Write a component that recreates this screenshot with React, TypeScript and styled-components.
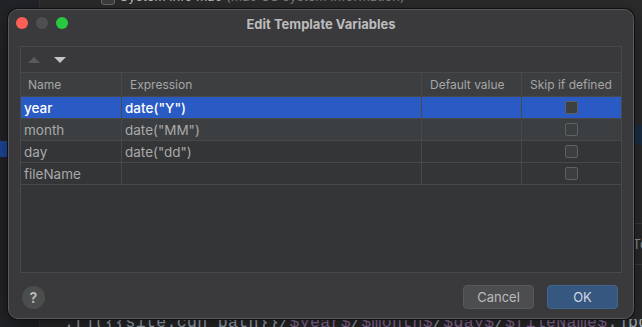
import styled, { createGlobalStyle } from 'styled-components';

const GlobalStyle = createGlobalStyle`
  body {
    margin: 0;
    background: #2b2b2b;
    font-family: 'Inter', 'Liberation Sans', sans-serif;
  }
`;

const Backdrop = styled.div`
  position: relative;
  width: 642px;
  height: 327px;
  overflow: hidden;
  display: grid;
  grid-template-columns: 40px 1fr;
  background: #2b2b2b;
`;

const Sidebar = styled.div`
  display: flex;
  flex-direction: column;
  background: #232428;
  border-right: 1px solid #323336;
`;

const SideItem = styled.div<{ top: number }>`
  margin-top: ${(p) => p.top}px;
  height: 16px;
  background: #1f4a9e;
`;

const Main = styled.div`
  display: flex;
  flex-direction: column;
`;

const SettingsRow = styled.div`
  height: 9px;
  display: flex;
  align-items: flex-end;
  overflow: hidden;
  padding-left: 61px;
  gap: 5px;
  font-size: 13px;
  line-height: 16px;
`;

const SmallBox = styled.span`
  width: 12px;
  height: 12px;
  margin-bottom: 4px;
  border: 1px solid #6b6b6b;
  border-radius: 3px;
  background: #3c3f41;
`;

const Label = styled.span`
  color: #bbbbbb;
  margin-bottom: 5px;
`;

const Dim = styled.span`
  color: #7f7f7f;
  margin-left: 4px;
`;

const Band = styled.div<{ top: number; color: string }>`
  margin-top: ${(p) => p.top}px;
  height: 20px;
  background: ${(p) => p.color};
`;

const ToolRow = styled.div`
  margin-top: 78px;
  height: 40px;
  border-top: 1px solid #3c3d40;
  border-bottom: 1px solid #3c3d40;
  display: flex;
  align-items: center;
  justify-content: flex-end;
  font-size: 13px;
  color: #9a9a9a;
`;

const CodeLine = styled.div`
  margin-top: auto;
  height: 8px;
  overflow: hidden;
  padding-left: 24px;
  font-family: 'Liberation Mono', monospace;
  font-size: 16.5px;
  letter-spacing: 0.35px;
  line-height: 8px;
  color: #a9b7c6;
  white-space: pre;
  span {
    color: #9876aa;
  }
`;

const Dialog = styled.div`
  position: absolute;
  left: 8px;
  top: 9px;
  width: 626px;
  height: 310px;
  box-sizing: border-box;
  border-radius: 10px;
  background: #3a3a3c;
  border: 1px solid #58595b;
  box-shadow: 0 0 0 1px #101012, 0 8px 24px rgba(0, 0, 0, 0.5);
  display: flex;
  flex-direction: column;
`;

const TitleBar = styled.div`
  position: relative;
  height: 27px;
  display: flex;
  align-items: center;
  justify-content: center;
  flex-shrink: 0;
`;

const Lights = styled.div`
  position: absolute;
  left: 7px;
  top: 7px;
  display: flex;
  gap: 8px;
`;

const Light = styled.span<{ color: string }>`
  width: 12px;
  height: 12px;
  border-radius: 50%;
  background: ${(p) => p.color};
`;

const Title = styled.div`
  margin-top: 1px;
  font-size: 13px;
  font-weight: 700;
  color: #bcbcbc;
`;

const Body = styled.div`
  flex: 1;
  display: flex;
  flex-direction: column;
  padding: 9px 11px 9px;
`;

const Panel = styled.div`
  height: 227px;
  box-sizing: border-box;
  border: 1px solid #49494b;
  background: #343537;
  display: flex;
  flex-direction: column;
`;

const Toolbar = styled.div`
  height: 25px;
  display: flex;
  align-items: center;
  gap: 14px;
  padding-left: 7px;
  background: #39393b;
  border-bottom: 1px solid #49494b;
`;

const Grid = styled.div`
  display: grid;
  grid-template-columns: 101px 300px 100px 100px;
`;

const HeadCell = styled.div`
  height: 23px;
  display: flex;
  align-items: center;
  padding-left: 8px;
  font-size: 12px;
  color: #a6a6a6;
  background: #3c3e40;
  border-bottom: 1px solid #49494b;
  border-right: 1px solid #49494b;
  &:first-child {
    padding-left: 7px;
  }
`;

const Cell = styled.div<{ selected: boolean; light: boolean; center?: boolean }>`
  height: 21px;
  display: flex;
  align-items: center;
  justify-content: ${(p) => (p.center ? 'center' : 'flex-start')};
  padding-left: ${(p) => (p.center ? 0 : 3)}px;
  font-size: 13.5px;
  font-weight: ${(p) => (p.selected ? 500 : 400)};
  color: ${(p) => (p.selected ? '#ffffff' : '#a9a9a9')};
  background: ${(p) => (p.selected ? '#2a5ac4' : p.light ? '#3c3f41' : '#343537')};
  border-bottom: 1px solid #49494b;
  border-right: 1px solid #49494b;
  &:first-child {
    padding-left: 2px;
  }
`;

const Check = styled.span<{ selected: boolean }>`
  width: 11px;
  height: 11px;
  border: 1px solid #5e6062;
  border-radius: 2px;
  background: ${(p) => (p.selected ? '#3d4042' : '#3c3f41')};
`;

const Footer = styled.div`
  margin-top: auto;
  display: flex;
  align-items: center;
  gap: 13px;
  padding-left: 2px;
  padding-right: 4px;
`;

const Help = styled.div`
  width: 23px;
  height: 23px;
  border-radius: 50%;
  background: #4a4c4e;
  display: flex;
  align-items: center;
  justify-content: center;
  color: #b8b8b8;
  font-weight: 700;
  font-size: 14px;
  margin-right: auto;
`;

const Button = styled.button<{ primary?: boolean }>`
  width: 71px;
  height: 24px;
  border-radius: 4px;
  font-family: inherit;
  font-size: 13px;
  color: ${(p) => (p.primary ? '#d0d7e0' : '#bbbbbb')};
  background: ${(p) => (p.primary ? '#365880' : '#4b4d4f')};
  border: 1px solid ${(p) => (p.primary ? '#41658e' : '#56585a')};
`;

const rows = [
  { name: 'year', expr: 'date("Y")' },
  { name: 'month', expr: 'date("MM")' },
  { name: 'day', expr: 'date("dd")' },
  { name: 'fileName', expr: '' },
];

export default function App() {
  return (
    <>
      <GlobalStyle />
      <Backdrop>
        <Sidebar>
          <SideItem top={141} />
        </Sidebar>
        <Main>
          <SettingsRow>
            <SmallBox />
            <Label>
              System info mac<Dim>(mac OS system information)</Dim>
            </Label>
          </SettingsRow>
          <Band top={116} color="#1c3048" />
          <ToolRow>Tool</ToolRow>
          <CodeLine>
            {'.[]({{site.cdn_path}}/'}
            <span>$year$</span>/<span>$month$</span>/<span>$day$</span>/
            <span>$fileName$</span>.jpg)
          </CodeLine>
        </Main>
        <Dialog>
          <TitleBar>
            <Lights>
              <Light color="#fe5f57" />
              <Light color="#4e4f51" />
              <Light color="#28c840" />
            </Lights>
            <Title>Edit Template Variables</Title>
          </TitleBar>
          <Body>
            <Panel>
              <Toolbar>
                <svg width="12" height="6" viewBox="0 0 12 6">
                  <polygon points="0,6 12,6 6,0" fill="#585a5c" />
                </svg>
                <svg width="12" height="6" viewBox="0 0 12 6">
                  <polygon points="0,0 12,0 6,6" fill="#c4c4c4" />
                </svg>
              </Toolbar>
              <Grid>
                <HeadCell>Name</HeadCell>
                <HeadCell>Expression</HeadCell>
                <HeadCell>Default value</HeadCell>
                <HeadCell>Skip if defined</HeadCell>
                {rows.map((r, i) => {
                  const sel = i === 0;
                  const light = i === 1;
                  return [
                    <Cell key={r.name + 'n'} selected={sel} light={light}>
                      {r.name}
                    </Cell>,
                    <Cell key={r.name + 'e'} selected={sel} light={light}>
                      {r.expr}
                    </Cell>,
                    <Cell key={r.name + 'd'} selected={sel} light={light} />,
                    <Cell key={r.name + 's'} selected={sel} light={light} center>
                      <Check selected={sel} />
                    </Cell>,
                  ];
                })}
              </Grid>
            </Panel>
            <Footer>
              <Help>?</Help>
              <Button>Cancel</Button>
              <Button primary>OK</Button>
            </Footer>
          </Body>
        </Dialog>
      </Backdrop>
    </>
  );
}
